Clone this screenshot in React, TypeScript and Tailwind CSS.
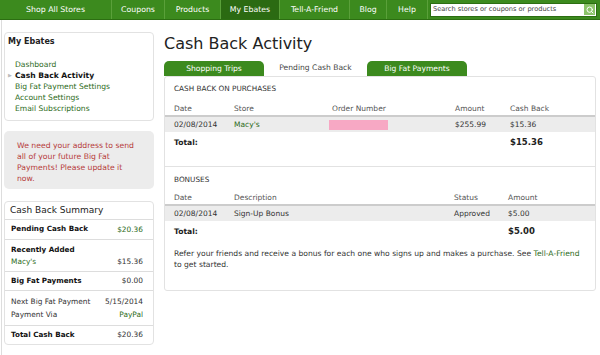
import { Search } from "lucide-react";

const font = { fontFamily: '"DejaVu Sans", Verdana, sans-serif' };

const navItems = [
  { label: "Shop All Stores", w: "w-[112px]" },
  { label: "Coupons", w: "w-[53px]" },
  { label: "Products", w: "w-[56px]" },
  { label: "My Ebates", w: "w-[59px]", active: true },
  { label: "Tell-A-Friend", w: "w-[70px]" },
  { label: "Blog", w: "w-[37px]" },
  { label: "Help", w: "w-[41px]" },
];

function Nav() {
  return (
    <div className="flex h-[20px] bg-[#3c8a1e] border-b border-[#2c6e12]">
      {navItems.map((n) => (
        <div
          key={n.label}
          className={`${n.w} flex items-center justify-center text-white text-[7.8px] border-r border-[#5aa03a] ${
            n.active ? "bg-[#2b6a12]" : ""
          }`}
        >
          {n.label}
        </div>
      ))}
      <div className="flex-1 flex items-center pl-[2px] pr-[3px]">
        <div className="flex-1 h-[14px] bg-white border border-[#2c6e12] flex items-center pl-[2px] pr-[1px]">
          <span className="flex-1 text-[6.6px] text-[#444]">Search stores or coupons or products</span>
          <span className="w-[11px] h-[11px] bg-[#8cc46a] flex items-center justify-center">
            <Search className="w-[8px] h-[8px] text-white" strokeWidth={3} />
          </span>
        </div>
      </div>
    </div>
  );
}

function Sidebar() {
  const links = ["Dashboard", "Cash Back Activity", "Big Fat Payment Settings", "Account Settings", "Email Subscriptions"];
  return (
    <div className="w-[150px] flex flex-col pt-[12px]">
      <div className="border border-[#e2e2e2] rounded-[4px] pl-[3px] pt-[3px] pb-[6px]">
        <div className="text-[8px] font-bold text-[#222] h-[12px] flex items-center">My Ebates</div>
        <div className="mt-[11px] flex flex-col">
          {links.map((l, i) => (
            <div key={l} className="h-[11px] flex items-center text-[7.6px] leading-none">
              <span className="w-[7px] text-[#bbb] text-[5px]">{i === 1 ? "▶" : ""}</span>
              <span className={i === 1 ? "font-bold text-[#111]" : "text-[#2d6b1a]"}>{l}</span>
            </div>
          ))}
        </div>
      </div>
      <div className="mt-[10px] bg-[#ececec] rounded-[5px] pl-[13px] pr-[12px] pt-[9px] pb-[5px] text-[7.7px] leading-[11px] text-[#b63a3a]">
        We need your address to send all of your future Big Fat Payments! Please update it now.
      </div>
      <div className="mt-[12px] border border-[#e2e2e2] rounded-[4px] text-[7.4px]">
        <div className="h-[18px] flex items-center pl-[5px] text-[9px] text-[#222] border-b border-[#ddd]">
          Cash Back Summary
        </div>
        <div className="h-[20px] flex items-center justify-between pl-[6px] pr-[10px] border-b border-[#ddd]">
          <span className="font-bold text-[7.2px] text-[#111]">Pending Cash Back</span>
          <span className="text-[#2d6b1a]">$20.36</span>
        </div>
        <div className="pt-[4px] pb-[3px] pl-[6px] pr-[10px] border-b border-[#ddd]">
          <div className="h-[12px] flex items-center font-bold text-[7.2px] text-[#111]">Recently Added</div>
          <div className="h-[12px] flex items-center justify-between">
            <span className="text-[#2d6b1a]">Macy's</span>
            <span className="text-[#333]">$15.36</span>
          </div>
        </div>
        <div className="h-[19px] flex items-center justify-between pl-[6px] pr-[10px] border-b border-[#ddd]">
          <span className="font-bold text-[7.2px] text-[#111]">Big Fat Payments</span>
          <span className="text-[#333]">$0.00</span>
        </div>
        <div className="pt-[4px] pb-[4px] pl-[6px] pr-[10px] border-b border-[#ddd]">
          <div className="h-[13px] flex items-center justify-between text-[#333]">
            <span>Next Big Fat Payment</span>
            <span>5/15/2014</span>
          </div>
          <div className="h-[13px] flex items-center justify-between">
            <span className="text-[#333]">Payment Via</span>
            <span className="text-[#2d6b1a]">PayPal</span>
          </div>
        </div>
        <div className="h-[18px] flex items-center justify-between pl-[6px] pr-[10px]">
          <span className="font-bold text-[7.2px] text-[#111]">Total Cash Back</span>
          <span className="text-[#333]">$20.36</span>
        </div>
      </div>
    </div>
  );
}

function Tabs() {
  return (
    <div className="flex items-end h-[16px] text-[7.6px]">
      <div className="w-[100px] h-[15px] bg-[#3c8a1e] rounded-t-[5px] text-white flex items-center justify-center">
        Shopping Trips
      </div>
      <div className="w-[103px] h-[16px] text-[#444] flex items-center justify-center">Pending Cash Back</div>
      <div className="w-[100px] h-[15px] bg-[#3c8a1e] rounded-t-[5px] text-white flex items-center justify-center">
        Big Fat Payments
      </div>
    </div>
  );
}

function Main() {
  return (
    <div className="flex-1 pl-[10px] pr-[4px] pt-[8px]">
      <div className="text-[16px] text-[#222] h-[32px] leading-[32px]">Cash Back Activity</div>
      <Tabs />
      <div className="border border-[#e2e2e2] rounded-[3px] text-[7.5px] text-[#333] pb-[20px]">
        <div className="pl-[9px] pt-[7px] h-[26px] text-[7.3px] text-[#333]">CASH BACK ON PURCHASES</div>
        <div className="grid grid-cols-[60px_98px_123px_55px_1fr] pl-[9px] h-[14px] items-center border-b-2 border-[#ccc] text-[#555]">
          <span>Date</span>
          <span>Store</span>
          <span>Order Number</span>
          <span>Amount</span>
          <span>Cash Back</span>
        </div>
        <div className="grid grid-cols-[60px_95px_126px_55px_1fr] pl-[9px] h-[15px] items-center bg-[#ececec]">
          <span>02/08/2014</span>
          <span className="text-[#2d6b1a]">Macy's</span>
          <span className="flex">
            <span className="w-[59px] h-[10px] bg-[#f7a8c4]" />
          </span>
          <span>$255.99</span>
          <span>$15.36</span>
        </div>
        <div className="flex pl-[9px] h-[21px] items-center">
          <span className="w-[336px] font-bold text-[7.6px] text-[#222]">Total:</span>
          <span className="font-bold text-[8.5px] text-[#222]">$15.36</span>
        </div>
        <div className="h-[14px] border-b border-[#e2e2e2]" />
        <div className="pl-[9px] pt-[8px] h-[25px] text-[7.3px] text-[#333]">BONUSES</div>
        <div className="grid grid-cols-[60px_220px_54px_1fr] pl-[9px] h-[14px] items-center border-b-2 border-[#ccc] text-[#555]">
          <span>Date</span>
          <span>Description</span>
          <span>Status</span>
          <span>Amount</span>
        </div>
        <div className="grid grid-cols-[60px_220px_54px_1fr] pl-[9px] h-[15px] items-center bg-[#ececec]">
          <span>02/08/2014</span>
          <span>Sign-Up Bonus</span>
          <span>Approved</span>
          <span>$5.00</span>
        </div>
        <div className="flex pl-[9px] h-[21px] items-center">
          <span className="w-[334px] font-bold text-[7.6px] text-[#222]">Total:</span>
          <span className="font-bold text-[8.5px] text-[#222]">$5.00</span>
        </div>
        <div className="pl-[9px] pr-[6px] pt-[6px] text-[7.6px] leading-[11px] text-[#333]">
          Refer your friends and receive a bonus for each one who signs up and makes a purchase. See{" "}
          <span className="text-[#2d6b1a]">Tell-A-Friend</span> to get started.
        </div>
      </div>
    </div>
  );
}

export default function App() {
  return (
    <div className="w-[600px] h-[355px] bg-white overflow-hidden" style={font}>
      <Nav />
      <div className="flex border-l border-[#ddd] ml-[1px] pl-[2px] h-[335px]">
        <Sidebar />
        <Main />
      </div>
    </div>
  );
}
